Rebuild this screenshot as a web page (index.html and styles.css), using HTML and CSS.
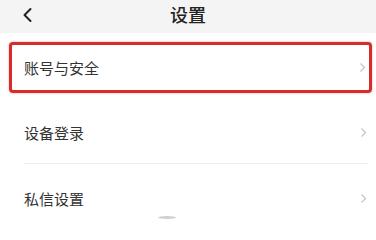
FILE: index.html
```html
<!DOCTYPE html>
<html lang="zh-CN">
<head>
<meta charset="utf-8">
<title>设置</title>
<link rel="stylesheet" href="styles.css">
</head>
<body>
<div class="page">
  <header class="header">
    <svg class="back" width="12" height="16" viewBox="0 0 12 16"><path d="M8.5 2 L2.5 8 L8.5 14" fill="none" stroke="#222" stroke-width="2" stroke-linecap="round" stroke-linejoin="round"/></svg>
    <h1 class="title">设置</h1>
  </header>
  <main class="list">
    <div class="row row-highlight">
      <span class="label">账号与安全</span>
      <svg class="chev" width="7" height="11" viewBox="0 0 7 11"><path d="M1.5 1.5 L5.5 5.5 L1.5 9.5" fill="none" stroke="#c4c4c4" stroke-width="1.2"/></svg>
    </div>
    <div class="row row-plain">
      <span class="label">设备登录</span>
      <svg class="chev" width="7" height="11" viewBox="0 0 7 11"><path d="M1.5 1.5 L5.5 5.5 L1.5 9.5" fill="none" stroke="#c4c4c4" stroke-width="1.2"/></svg>
    </div>
    <div class="row row-plain row-last">
      <span class="label">私信设置</span>
      <svg class="chev" width="7" height="11" viewBox="0 0 7 11"><path d="M1.5 1.5 L5.5 5.5 L1.5 9.5" fill="none" stroke="#c4c4c4" stroke-width="1.2"/></svg>
    </div>
  </main>
  <div class="smudge"></div>
</div>
</body>
</html>
```
FILE: styles.css
```css
html, body {
  margin: 0;
  padding: 0;
  background: #ffffff;
}
body {
  font-family: "Noto Sans CJK SC", "Noto Sans", sans-serif;
  color: #333333;
  overflow: hidden;
}
.page {
  position: relative;
  width: 376px;
  height: 219px;
  overflow: hidden;
}
.header {
  position: relative;
  height: 33px;
  background: #f4f4f4;
  display: flex;
  align-items: center;
  justify-content: center;
}
.back {
  position: absolute;
  left: 22px;
  top: 7px;
}
.title {
  margin: 0;
  font-size: 18px;
  font-weight: 500;
  color: #222222;
  line-height: 1;
  margin-top: -5px;
}
.list {
  display: flex;
  flex-direction: column;
}
.row {
  display: flex;
  align-items: center;
  justify-content: space-between;
}
.label {
  font-size: 15px;
  line-height: 1;
  color: #333333;
}
.row-highlight {
  margin: 9px 4px 0 9px;
  height: 45px;
  border: 3px solid #d42d2a;
  border-radius: 4px;
  padding: 0 3px 0 12px;
  box-shadow: 0 0 2px rgba(212, 45, 42, 0.5);
}
.row-plain {
  margin: 0 8px 0 24px;
  padding-right: 1px;
  height: 62px;
}
.row-plain:not(.row-last) {
  margin-top: 8px;
  border-bottom: 1px solid #eeeeee;
}
.row-last {
  height: 68px;
  padding-bottom: 2px;
}
.smudge {
  position: absolute;
  left: 158px;
  top: 216px;
  width: 18px;
  height: 3px;
  border-radius: 50%;
  background: #cfcfcf;
  filter: blur(0.6px);
}
```
